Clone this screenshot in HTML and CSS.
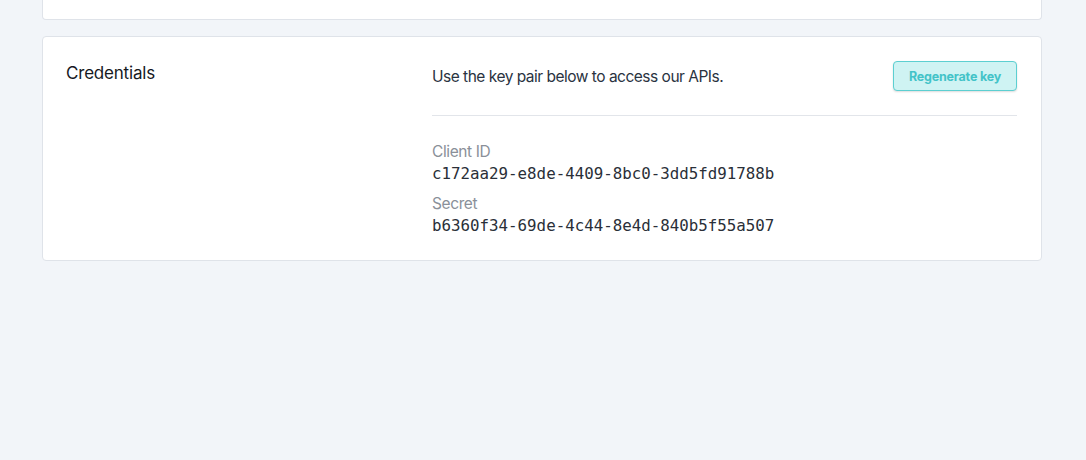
FILE: index.html
```html
<!DOCTYPE html>
<html lang="en">
<head>
<meta charset="utf-8">
<title>Credentials</title>
<link rel="stylesheet" href="styles.css">
</head>
<body>
<main class="page">
  <section class="card card-prev"></section>
  <section class="card card-creds">
    <h2 class="card-title">Credentials</h2>
    <div class="card-body">
      <div class="intro">
        <p class="intro-text">Use the key pair below to access our APIs.</p>
        <button class="btn-regen" type="button">Regenerate key</button>
      </div>
      <dl class="keys">
        <div class="key">
          <dt class="key-label">Client ID</dt>
          <dd class="key-value">c172aa29-e8de-4409-8bc0-3dd5fd91788b</dd>
        </div>
        <div class="key">
          <dt class="key-label">Secret</dt>
          <dd class="key-value">b6360f34-69de-4c44-8e4d-840b5f55a507</dd>
        </div>
      </dl>
    </div>
  </section>
</main>
</body>
</html>
```
FILE: styles.css
```css
* { box-sizing: border-box; }
html, body { margin: 0; padding: 0; }
body {
  background: #f2f5f9;
  font-family: Inter, "Noto Sans", sans-serif;
  color: #2d3748;
  width: 1086px;
  height: 460px;
  overflow: hidden;
}
.page {
  padding-left: 42px;
  width: 1042px;
  display: flex;
  flex-direction: column;
  gap: 16px;
}
.card {
  background: #ffffff;
  border: 1px solid #dfe3e9;
  border-radius: 4px;
}
.card-prev {
  height: 20px;
  border-top: none;
  border-radius: 0 0 4px 4px;
}
.card-creds {
  padding: 24px 24px 24px 23px;
  display: grid;
  grid-template-columns: 366px 1fr;
}
.card-title {
  margin: 0;
  font-size: 17px;
  font-weight: 400;
  line-height: 24px;
  letter-spacing: -0.2px;
  color: #16191f;
}
.card-body { display: flex; flex-direction: column; }
.intro {
  display: flex;
  align-items: center;
  justify-content: space-between;
  padding-bottom: 24px;
  border-bottom: 1px solid #e2e5ea;
}
.intro-text {
  margin: 0;
  font-size: 15.5px;
  line-height: 24px;
  letter-spacing: -0.5px;
  color: #2a3341;
  padding-top: 1px;
}
.btn-regen {
  height: 30px;
  padding: 0 15px;
  background: #cff3f3;
  border: 1px solid #5ccfd1;
  border-radius: 4px;
  box-shadow: 0 1px 2px rgba(0,0,0,0.14);
  font-family: Inter, "Noto Sans", sans-serif;
  font-size: 12.5px;
  font-weight: 700;
  letter-spacing: -0.2px;
  color: #43c3c8;
}
.keys {
  margin: 24px 0 0;
  display: flex;
  flex-direction: column;
  gap: 8px;
}
.key { display: flex; flex-direction: column; }
.key-label {
  font-size: 15.5px;
  line-height: 24px;
  letter-spacing: -0.4px;
  color: #8a9099;
}
.key-value {
  margin: 0;
  font-family: "DejaVu Sans Mono", "Liberation Mono", monospace;
  font-size: 15.8px;
  line-height: 20px;
  color: #2a2f38;
}
```
